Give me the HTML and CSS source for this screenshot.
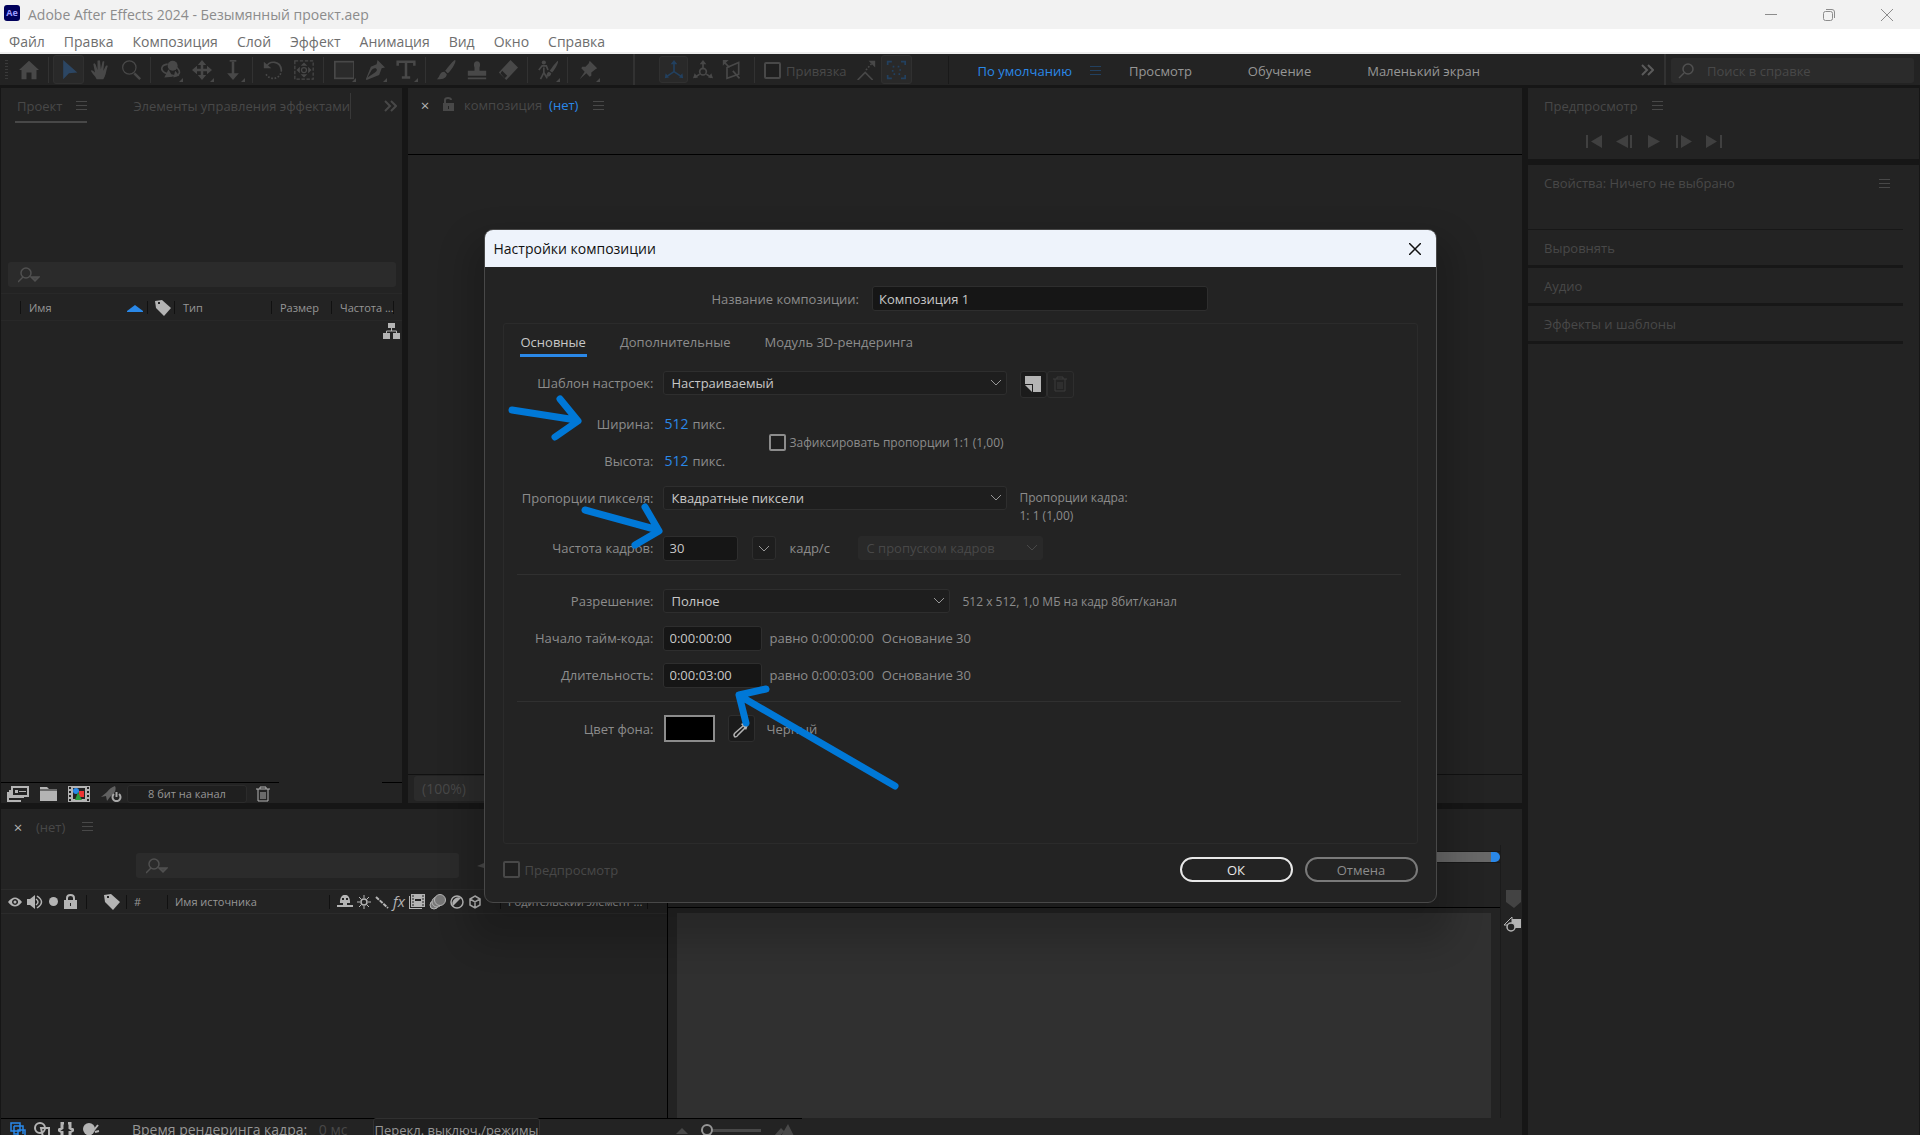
FILE: index.html
```html
<!DOCTYPE html>
<html lang="ru">
<head>
<meta charset="utf-8">
<title>Adobe After Effects 2024 - Безымянный проект.aep</title>
<link rel="stylesheet" href="styles.css">
</head>
<body>
<header class="titlebar">
  <span class="app-badge">Ae</span>
  <span class="app-title">Adobe After Effects 2024 - Безымянный проект.aep</span>
  <div class="window-buttons">
    <button aria-label="Свернуть"><svg width="14" height="14" viewBox="0 0 14 14"><path d="M1 6.500h12"/></svg></button>
    <button aria-label="Восстановить"><svg width="14" height="14" viewBox="0 0 14 14"><rect x="1.500" y="3.500" width="9" height="9" rx="2"/><path d="M4 1.500h6q2.500 0 2.500 2.500v6"/></svg></button>
    <button aria-label="Закрыть"><svg width="14" height="14" viewBox="0 0 14 14"><path d="M1 1l12 12M13 1L1 13"/></svg></button>
  </div>
</header>
<nav class="menubar">
  <a href="#">Файл</a><a href="#">Правка</a><a href="#">Композиция</a><a href="#">Слой</a><a href="#">Эффект</a><a href="#">Анимация</a><a href="#">Вид</a><a href="#">Окно</a><a href="#">Справка</a>
</nav>

<div class="toolbar">
  <span class="grip"></span>
  <button class="tool" aria-label="Главная"><svg viewBox="0 0 24 24"><path class="f" d="M12 1L24 12h-3v11h-6v-8H9v8H3V12H0z"/></svg></button>
  <span class="sep"></span>
  <button class="tool on" aria-label="Выделение"><svg viewBox="0 0 24 24"><path fill="#2c4663" d="M5 0l17 15-10 1-7 7z"/></svg></button>
  <button class="tool" aria-label="Рука"><svg viewBox="0 0 24 24"><path class="f" d="M8 23c-2-4-5-6-7-10 1-2 3 0 5 2L4 5c1-2 2-1 3 1l2 6 0-11c1-1 3-1 3 0l1 10 2-9c1-1 3 0 2 1l-1 10 3-6c1-1 3 0 2 1-2 6-2 11-5 15z"/></svg></button>
  <button class="tool" aria-label="Масштаб"><svg viewBox="0 0 24 24"><circle class="s" cx="10" cy="9" r="8"/><path class="s w3" d="M16 16l7 7"/></svg></button>
  <span class="sep"></span>
  <button class="tool more" aria-label="Орбита"><svg viewBox="0 0 24 24"><circle class="f" cx="14" cy="7" r="6"/><path class="s w2" d="M8 5C0 6-1 12 4 15l7 3M19 9c5 5 4 9-3 10l-4-1"/><path class="f" d="M9 11l5 9-10 1zM17 13l-2 8 7-2z"/></svg></button>
  <button class="tool more" aria-label="Панорама"><svg viewBox="0 0 24 24"><path class="s w3" d="M12 4v16M4 12h16"/><path class="f" d="M12 0l5 6H7zM12 24l5-6H7zM0 12l6-5v10zM24 12l-6-5v10z"/></svg></button>
  <button class="tool more" aria-label="Приближение"><svg viewBox="0 0 24 24"><path class="s w3" d="M12 2v16"/><path class="s w2" d="M8 1h8"/><path class="f" d="M12 24l7-8H5z"/></svg></button>
  <span class="sep"></span>
  <button class="tool" aria-label="Поворот"><svg viewBox="0 0 24 24"><path class="s w2" d="M4 8C8 0 21 1 22 12"/><path class="s w2" stroke-dasharray="2 2" d="M22 12c0 11-14 14-19 4"/><path class="f" d="M1 2v8h9z"/></svg></button>
  <button class="tool" aria-label="Опорная точка"><svg viewBox="0 0 24 24"><rect class="s" x="1" y="1" width="22" height="22" stroke-dasharray="4 2"/><circle class="s" cx="12" cy="12" r="3"/><path class="f" d="M12 3l4 4H8zM12 21l4-4H8zM3 12l4-4v8zM21 12l-4-4v8z"/></svg></button>
  <span class="sep"></span>
  <button class="tool more" aria-label="Прямоугольник"><svg viewBox="0 0 24 24"><rect x="1" y="2" width="23" height="20" fill="#2b2b2b" stroke="#484848" stroke-width="2"/></svg></button>
  <button class="tool more" aria-label="Перо"><svg viewBox="0 0 24 24"><path class="f" fill-rule="evenodd" d="M15 0l9 9-4 1-3 8L2 24l-1-1L7 8l7-3zM3 21l9-6q4-3 1-5-3-1-5 2z"/></svg></button>
  <button class="tool more" aria-label="Текст"><svg viewBox="0 0 24 24"><path class="s w3" d="M2 7V2h20v5M12 2v19M7 21h10"/></svg></button>
  <span class="sep"></span>
  <button class="tool" aria-label="Кисть"><svg viewBox="0 0 24 24"><path class="f" d="M23 0c2 2-5 13-9 16l-3-3C14 9 21 0 23 0zM10 14l3 3c-1 6-7 6-12 6 4-3 3-9 9-9z"/></svg></button>
  <button class="tool" aria-label="Штамп"><svg viewBox="0 0 24 24"><path class="f" d="M9 9C5-1 19-1 15 9v4h8v6H1v-6h8zM1 21h22v2H1z"/></svg></button>
  <button class="tool" aria-label="Ластик"><svg viewBox="0 0 24 24"><path class="f" d="M15 0l9 9-14 15-9-9z"/><path d="M5 13l6 6-3 3-5-6z" fill="#232323"/></svg></button>
  <span class="sep"></span>
  <button class="tool more" aria-label="Ротоскопия"><svg viewBox="0 0 24 24"><circle class="f" cx="7" cy="3" r="2.500"/><path class="s w2" d="M1 12l4-5h5l2 5M7 9v6l-4 8M7 15l4 7"/><path class="f" d="M24 1c1 2-4 11-7 14l-3-2c3-4 8-11 10-12zM13 14l3 2c-1 5-4 4-7 4 2-2 1-5 4-6z"/></svg></button>
  <span class="sep"></span>
  <button class="tool more" aria-label="Марионетка"><svg viewBox="0 0 24 24"><path class="f" d="M14 1l9 9-2 1-5 4v4l-2 1-4-4-8 7 6-9-4-4 1-2h4l4-4z"/></svg></button>
  <span class="sep wide"></span>
  <div class="axes">
    <button class="tool axis on" aria-label="Локальные оси"><svg viewBox="0 0 24 24"><path stroke="#22405f" fill="none" stroke-width="2" d="M12 3v11L3 20M12 14l9 6"/><path fill="#22405f" d="M12 0l4 5H8zM1 22l1-6 4 5zM23 22l-1-6-4 5z"/></svg></button>
    <button class="tool axis" aria-label="Мировые оси"><svg viewBox="0 0 24 24"><path class="s w2" d="M12 3v8M8 17l-6 4M16 17l6 4"/><circle class="s w2" cx="12" cy="14" r="4"/><path class="f" d="M12 0l4 5H8zM0 22l2-6 4 5zM24 22l-2-6-4 5z"/></svg></button>
    <button class="tool axis" aria-label="Оси вида"><svg viewBox="0 0 24 24"><path class="s w2" d="M2 2l7 7M6 9l14-6v14L6 22zM13 13l8 9"/><path class="f" d="M1 0h7L1 7z"/></svg></button>
  </div>
  <span class="sep"></span>
  <label class="snap"><input class="check dim" type="checkbox">Привязка</label>
  <button class="tool axis" aria-label="Привязка к краям"><svg viewBox="0 0 24 24"><path class="s w2" d="M2 24l9-9 9 9"/><path class="s w2" stroke-dasharray="2 2" d="M12 12l7-8"/><path class="f" d="M15 1h8v8z"/></svg></button>
  <button class="tool on" aria-label="Привязка к элементам"><svg viewBox="0 0 24 24"><path stroke="#22405f" fill="none" stroke-width="2" d="M2 6V2h5M18 2h5v4M23 18v4h-5M7 22H2v-4"/><path stroke="#22405f" fill="none" stroke-width="2" stroke-dasharray="2 4" d="M8 8h9v9H8z"/></svg></button>
  <span class="sep far"></span>
  <div class="workspaces">
    <a class="current" href="#">По умолчанию</a><span class="burger blue"></span>
    <a href="#">Просмотр</a><a href="#">Обучение</a><a href="#">Маленький экран</a>
  </div>
  <div class="help">
    <svg class="chev" width="13" height="12" viewBox="0 0 13 12"><path d="M1 1l5 5-5 5M7 1l5 5-5 5"/></svg>
    <span class="sep"></span>
    <label class="field helpfield"><svg class="lens" width="18" height="16" viewBox="0 0 18 16"><circle cx="11" cy="6" r="5"/><path d="M7 10l-5 5"/></svg><input type="text" placeholder="Поиск в справке" aria-label="Поиск в справке"></label>
  </div>
</div>

<main class="workspace">
  <div class="left">
    <div class="upper">
      <section class="panel project">
        <div class="tabs">
          <span class="tab active">Проект<span class="burger"></span></span>
          <span class="tab second">Элементы управления эффектами</span>
          <svg class="chev" width="13" height="12" viewBox="0 0 13 12"><path d="M1 1l5 5-5 5M7 1l5 5-5 5"/></svg>
        </div>
        <label class="field search"><svg class="lens" width="22" height="16" viewBox="0 0 22 16"><circle cx="8" cy="6" r="5"/><path d="M5 10l-5 5"/><path d="M13 10h8l-4 4z" class="f"/></svg><input type="text" aria-label="Поиск в проекте"></label>
        <table class="columns">
          <thead><tr>
            <th class="c-pad"></th>
            <th class="c-name"><span class="cell">Имя<svg width="16" height="7" viewBox="0 0 16 7"><path fill="#2a88e8" d="M8 0l8 6v1H0V6z"/></svg></span></th>
            <th class="c-tag"><svg width="16" height="16" viewBox="0 0 16 16"><path class="lit" fill-rule="evenodd" d="M0 1l7-1 9 8-7 8-8-8zM3 2v2h2V2z"/></svg></th>
            <th class="c-type">Тип</th>
            <th class="c-size">Размер</th>
            <th class="c-rate">Частота ...</th>
            <th></th>
          </tr></thead>
        </table>
        <div class="flow"><svg width="17" height="16" viewBox="0 0 17 16"><path class="lit" d="M5 0h7v5H5zM0 10h7v6H0zM10 10h7v6h-7z"/><path d="M8.500 5v3M3.500 10V8h10v2" stroke="#b4b4b4" fill="none"/></svg></div>
        <div class="project-foot">
          <button aria-label="Интерпретация"><svg width="22" height="16" viewBox="0 0 22 16"><path d="M5 1h16v9H5z" fill="none" stroke="#b4b4b4" stroke-width="2"/><path class="lit" d="M8 4h3v3H8zM12 5h7v1h-7zM2 4h2v7h13v1H2zM0 6h2v8h12v2H0z"/></svg></button>
          <button aria-label="Новая папка"><svg width="17" height="14" viewBox="0 0 17 14"><path class="lit" d="M0 0h7l2 2h8v12H0z"/><path d="M0 3h17" stroke="#232323"/></svg></button>
          <button aria-label="Новая композиция"><svg width="22" height="16" viewBox="0 0 22 16"><path class="lit" d="M0 0h22v16H0z"/><path d="M2 1v14M20 1v14" stroke="#232323" stroke-width="2" stroke-dasharray="2 2"/><path d="M5 2h12v11H5z" fill="#232323"/><circle cx="8" cy="5" r="3" fill="#2a88e8"/><path d="M11 5h5v6h-5z" fill="#e33"/><path d="M10 6l4 8H7z" fill="#2a9a3a"/></svg></button>
          <button aria-label="Ускорение"><svg width="22" height="16" viewBox="0 0 22 16"><path fill="#606060" d="M14 0c2 4-1 8-5 11l-3 4-1-5-5 1 6-5C8 3 11 1 14 0z"/><path d="M13 8a4 4 0 1 0 5 0M15.500 6v5" stroke="#a8a8a8" stroke-width="2" fill="none"/></svg></button>
          <button class="depth">8 бит на канал</button>
          <button aria-label="Удалить"><svg width="14" height="16" viewBox="0 0 14 16"><path d="M0 3h14M4 3V1h6v2M2 3v12h10V3M5 6v7M7 6v7M9 6v7" fill="none" stroke="#b4b4b4"/></svg></button>
        </div>
      </section>
      <section class="panel comp">
        <div class="tabs">
          <button class="x" aria-label="Закрыть">×</button>
          <svg class="lock" width="13" height="14" viewBox="0 0 13 14"><path d="M1 6h11v8H1z" fill="#484848"/><path d="M3 6V3q0-2 3-2t3 2" fill="none" stroke="#484848" stroke-width="2"/><path d="M6 9h1v3H6z" fill="#232323"/></svg>
          <span>композиция</span><a class="blue-text" href="#">(нет)</a><span class="burger"></span>
        </div>
        <div class="viewer"></div>
        <div class="comp-foot"><button>(100%)</button></div>
      </section>
    </div>
    <section class="panel timeline">
      <div class="tabs"><button class="x" aria-label="Закрыть">×</button><span>(нет)</span><span class="burger"></span></div>
      <div class="time-body">
        <div class="layers">
          <div class="layer-tools">
            <label class="field layersearch"><svg class="lens" width="22" height="16" viewBox="0 0 22 16"><circle cx="8" cy="6" r="5"/><path d="M5 10l-5 5"/><path d="M13 10h8l-4 4z" class="f"/></svg><input type="text" aria-label="Поиск слоёв"></label>
            <svg width="14" height="5" viewBox="0 0 14 5"><path fill="#484848" d="M0 3l7-3v5z"/></svg>
          </div>
          <div class="layer-head">
            <div class="lh av">
              <svg width="14" height="10" viewBox="0 0 14 10"><path class="lit" fill-rule="evenodd" d="M0 5q7-9 14 0-7 9-14 0zM7 2a3 3 0 1 0 .1 0z"/><circle class="lit" cx="7" cy="5" r="1.500"/></svg>
              <svg width="16" height="14" viewBox="0 0 16 14"><path class="lit" d="M0 4h3l5-4v14l-5-4H0z"/><path d="M9 4q4 3 0 6M10 1q9 6 0 12" stroke="#b4b4b4" stroke-width="1.500" fill="none"/></svg>
              <svg width="11" height="11" viewBox="0 0 11 11"><circle class="lit" cx="5.500" cy="5.500" r="4.500"/></svg>
              <svg width="13" height="15" viewBox="0 0 13 15"><path class="lit" fill-rule="evenodd" d="M0 6h13v9H0zM6 9v3h1V9z"/><path d="M3 6V4q0-3 3.500-3T10 4v2" stroke="#b4b4b4" stroke-width="2" fill="none"/></svg>
            </div>
            <div class="lh tag"><svg width="16" height="16" viewBox="0 0 16 16"><path class="lit" fill-rule="evenodd" d="M0 1l7-1 9 8-7 8-8-8zM3 2v2h2V2z"/></svg></div>
            <div class="lh num">#</div>
            <div class="lh source">Имя источника</div>
            <div class="lh switches">
              <svg width="16" height="14" viewBox="0 0 16 14"><path class="lit" fill-rule="evenodd" d="M3 8C2-3 14-3 13 8h-3v2h6v2H0v-2h6V8zM5 3v2h2V3zM9 3v2h2V3z"/></svg>
              <svg width="14" height="14" viewBox="0 0 14 14"><circle cx="7" cy="7" r="3" fill="none" stroke="#b4b4b4" stroke-width="1.500"/><path d="M7 0v3M7 11v3M0 7h3M11 7h3M2 2l2 2M10 10l2 2M12 2l-2 2M4 10l-2 2" stroke="#b4b4b4"/></svg>
              <svg width="14" height="14" viewBox="0 0 14 14"><path d="M1 2l12 11" stroke="#b4b4b4" stroke-width="2" stroke-dasharray="4 1"/></svg>
              <i class="fx">fx</i>
              <svg width="16" height="15" viewBox="0 0 16 15"><path class="lit" d="M0 2h1v12h12v1H0zM2 0h14v13H2z"/><path d="M4 1v12M14 1v12" stroke="#232323" stroke-dasharray="2 1"/><path d="M6 6h6" stroke="#232323" stroke-width="2"/></svg>
              <svg width="17" height="16" viewBox="0 0 17 16"><g fill="#777" stroke="#b4b4b4"><circle cx="5" cy="11" r="4"/><circle cx="8" cy="8" r="5"/><circle cx="11" cy="6" r="5.500"/></g></svg>
              <svg width="14" height="14" viewBox="0 0 14 14"><circle cx="7" cy="7" r="6" fill="#232323" stroke="#b4b4b4" stroke-width="1.500"/><path class="lit" d="M11 3a6 6 0 0 0-8 8z"/></svg>
              <svg width="14" height="14" viewBox="0 0 14 14"><path d="M7 1l5 3v6l-5 3-5-3V4zM2 4l5 3 5-3M7 7v6" fill="none" stroke="#b4b4b4" stroke-width="1.500"/></svg>
            </div>
            <div class="lh parent">Родительский элемент ...</div>
          </div>
        </div>
        <div class="track">
          <div class="workarea"><span class="bar"></span><span class="cap"></span></div>
          <div class="ruler"></div>
          <div class="tracks"></div>
        </div>
        <div class="side">
          <svg width="15" height="18" viewBox="0 0 15 18"><path fill="#434343" d="M0 0h15v12l-7 6-8-6z"/></svg>
          <svg width="18" height="16" viewBox="0 0 18 16"><path class="lit" d="M9 3h9v9H9z"/><path d="M1 9l8-8v8z" stroke="#b4b4b4" fill="#232323"/><circle cx="8" cy="11" r="4" fill="#232323" stroke="#b4b4b4" stroke-width="1.500"/></svg>
        </div>
      </div>
      <div class="time-foot">
        <div class="panes">
          <svg width="16" height="16" viewBox="0 0 16 16"><path d="M1 1h9v8H1zM4 4h9v8M4 4v8h4M8 8h7v7H8z" stroke="#2a88e8" stroke-width="1.500" fill="none"/></svg>
          <svg width="16" height="16" viewBox="0 0 16 16"><circle cx="6" cy="6" r="5" fill="none" stroke="#b4b4b4" stroke-width="2"/><path d="M7 6h8v9H9z" fill="none" stroke="#b4b4b4" stroke-width="2"/></svg>
          <svg width="16" height="16" viewBox="0 0 16 16"><path d="M6 1H4v5L1 8l3 2v5h2M10 1h2v5l3 2-3 2v5h-2" fill="none" stroke="#b4b4b4" stroke-width="3"/></svg>
          <svg width="18" height="16" viewBox="0 0 18 16"><circle class="lit" cx="7" cy="7" r="6"/><path class="lit" d="M1 16q6-9 12 0z"/><path d="M12 8l4-5M13 10l4-1" stroke="#b4b4b4" stroke-width="2"/></svg>
        </div>
        <span class="render">Время рендеринга кадра: <span class="ms">0 мс</span></span>
        <button class="toggle">Перекл. выключ./режимы</button>
        <div class="zoomer">
          <svg width="12" height="8" viewBox="0 0 12 8"><path fill="#484848" d="M0 8l6-6 6 6z"/></svg>
          <input type="range" min="0" max="100" value="0" aria-label="Масштаб времени">
          <svg width="20" height="12" viewBox="0 0 20 12"><path fill="#484848" d="M0 12l7-8 3 3-4 5zM7 12l7-12 6 12z"/></svg>
        </div>
      </div>
    </section>
  </div>
  <aside class="right">
    <section class="panel preview">
      <div class="tabs">Предпросмотр<span class="burger"></span></div>
      <div class="transport">
        <button aria-label="В начало"><svg width="16" height="13" viewBox="0 0 16 13"><path d="M0 0h2v13H0zM16 0v13L5 6.500z"/></svg></button>
        <button aria-label="Кадр назад"><svg width="16" height="13" viewBox="0 0 16 13"><path d="M14 0h2v13h-2zM12 0v13L0 6.500z"/></svg></button>
        <button aria-label="Воспроизвести"><svg width="16" height="13" viewBox="0 0 16 13"><path d="M2 0l12 6.500L2 13z"/></svg></button>
        <button aria-label="Кадр вперёд"><svg width="16" height="13" viewBox="0 0 16 13"><path d="M0 0h2v13H0zM5 0l11 6.500L5 13z"/></svg></button>
        <button aria-label="В конец"><svg width="16" height="13" viewBox="0 0 16 13"><path d="M14 0h2v13h-2zM0 0l11 6.500L0 13z"/></svg></button>
      </div>
    </section>
    <section class="panel stack">
      <div class="item props">Свойства: Ничего не выбрано<span class="burger"></span></div>
      <div class="item">Выровнять</div>
      <div class="item">Аудио</div>
      <div class="item">Эффекты и шаблоны</div>
    </section>
  </aside>
</main>

<div class="dialog" role="dialog" aria-labelledby="dlg-title">
  <div class="dlg-head"><h1 id="dlg-title">Настройки композиции</h1><button aria-label="Закрыть"><svg width="12" height="12" viewBox="0 0 12 12"><path d="M0 0l12 12M12 0L0 12" stroke="#111" stroke-width="1.500"/></svg></button></div>
  <div class="dlg-body">
    <div class="name-row"><label for="cname">Название композиции:</label><input class="box" id="cname" type="text" value="Композиция 1"></div>
    <div class="sheet">
      <div class="dlg-tabs"><button class="active">Основные</button><button>Дополнительные</button><button>Модуль 3D-рендеринга</button></div>
      <div class="row">
        <label for="preset">Шаблон настроек:</label>
        <span class="pick long"><select id="preset"><option>Настраиваемый</option></select><svg width="12" height="7" viewBox="0 0 12 7"><path d="M1 1l5 5 5-5"/></svg></span>
        <div class="pair">
          <button class="sq" aria-label="Сохранить шаблон"><svg width="16" height="16" viewBox="0 0 16 16"><path d="M0 0h16v16H8V8H0z" fill="#b4b4b4"/><path d="M0 9h7v7z" fill="#b4b4b4"/></svg></button>
          <button class="sq off" aria-label="Удалить шаблон"><svg width="14" height="16" viewBox="0 0 14 16"><path d="M0 3h14M4 3V1h6v2M2 3v12h10V3M5 6v7M7 6v7M9 6v7" fill="none" stroke="#3c3c3c"/></svg></button>
        </div>
      </div>
      <div class="dims">
        <div class="dims-rows">
          <div class="row"><span class="lab">Ширина:</span><a class="num-link" href="#">512</a><span class="unit">пикс.</span></div>
          <div class="row"><span class="lab">Высота:</span><a class="num-link" href="#">512</a><span class="unit">пикс.</span></div>
        </div>
        <label class="ratio"><input class="check" type="checkbox">Зафиксировать пропорции 1:1 (1,00)</label>
      </div>
      <div class="row">
        <label for="par">Пропорции пикселя:</label>
        <span class="pick long"><select id="par"><option>Квадратные пиксели</option></select><svg width="12" height="7" viewBox="0 0 12 7"><path d="M1 1l5 5 5-5"/></svg></span>
        <p class="note two-lines">Пропорции кадра:<br>1: 1 (1,00)</p>
      </div>
      <div class="row fps">
        <label for="rate">Частота кадров:</label>
        <input class="box short" id="rate" type="text" value="30">
        <button class="drop" aria-label="Выбрать частоту"><svg width="12" height="7" viewBox="0 0 12 7"><path d="M1 1l5 5 5-5"/></svg></button>
        <span class="per">кадр/с</span>
        <span class="pick dis"><select aria-label="Тайм-код" disabled><option>С пропуском кадров</option></select><svg width="12" height="7" viewBox="0 0 12 7"><path d="M1 1l5 5 5-5"/></svg></span>
      </div>
      <hr>
      <div class="row">
        <label for="res">Разрешение:</label>
        <span class="pick mid"><select id="res"><option>Полное</option></select><svg width="12" height="7" viewBox="0 0 12 7"><path d="M1 1l5 5 5-5"/></svg></span>
        <span class="note">512 x 512, 1,0 МБ на кадр 8бит/канал</span>
      </div>
      <div class="row tight"><label for="start">Начало тайм-кода:</label><input class="box code" id="start" type="text" value="0:00:00:00"><span class="eq">равно 0:00:00:00</span><span class="eq">Основание 30</span></div>
      <div class="row tight"><label for="dur">Длительность:</label><input class="box code" id="dur" type="text" value="0:00:03:00"><span class="eq">равно 0:00:03:00</span><span class="eq">Основание 30</span></div>
      <hr>
      <div class="row colour"><span class="lab">Цвет фона:</span><button class="swatch" aria-label="Цвет фона"></button><button class="sq" aria-label="Пипетка"><svg width="16" height="18" viewBox="0 0 16 18"><path d="M10 6L2 13q-2 2 0 4 2 0 3-2l7-7" fill="none" stroke="#b4b4b4" stroke-width="1.500"/><path d="M8 4l2-1c2-4 6-3 6 0 0 2-2 3-2 5l-1 2z" fill="#b4b4b4"/></svg></button><span>Черный</span></div>
    </div>
    <div class="dlg-foot">
      <label class="prev"><input class="check dim" type="checkbox" disabled>Предпросмотр</label>
      <button class="pill primary">ОК</button><button class="pill">Отмена</button>
    </div>
  </div>
  <svg class="arrows" viewBox="0 0 951 674" width="951" height="674" aria-hidden="true">
    <path d="M27 180L91 190M75 169L93 191 70 207"/>
    <path d="M100 280L173 300M160 277L174 301 150 315"/>
    <path d="M410 556L255 466M281 459L254 465 261 493"/>
  </svg>
</div>
</body>
</html>
```
FILE: styles.css
```css
* { box-sizing: border-box; }
body {
  margin: 0;
  height: 100vh;
  overflow: hidden;
  position: relative;
  display: flex;
  flex-direction: column;
  background: #161616;
  color: #484848;
  font: 13px/18px "Open Sans", "Noto Sans", sans-serif;
}
button, input, select { font: inherit; color: inherit; }
button { background: none; border: 0; padding: 0; }
a { color: inherit; text-decoration: none; }
svg { display: block; flex: none; }
p { margin: 0; }
.lit { fill: #b4b4b4; }

/* Window frame */
.titlebar { flex: none; height: 29px; display: flex; align-items: center; background: #f2f2f2; color: #8c8c8c; font-size: 14px; padding-left: 4px; }
.app-badge { width: 16px; height: 16px; border-radius: 3px; background: #00005b; color: #9a9aff; font-size: 9px; line-height: 16px; font-weight: 700; text-align: center; margin-bottom: 3px; }
.app-title { margin-left: 8px; }
.window-buttons { margin-left: auto; display: flex; }
.window-buttons button { width: 58px; height: 29px; display: grid; place-items: center; }
.window-buttons svg { fill: none; stroke: #8c8c8c; }
.window-buttons button:last-child { margin-right: 4px; }
.menubar { flex: none; height: 25px; display: flex; gap: 19px; padding: 3px 9px 0; background: #fff; border-bottom: 2px solid #efefef; color: #6e6e6e; font-size: 14px; line-height: 20px; }

/* Toolbar */
.toolbar { flex: none; height: 31px; display: flex; align-items: center; background: #232323; padding-left: 5px; margin-bottom: 3px; white-space: nowrap; }
.grip { width: 3px; height: 19px; margin-right: 5px; background: repeating-linear-gradient(#3a3a3a 0 1px, #232323 1px 3px); }
.sep { width: 1px; height: 26px; margin: 0 4px; background: #323232; flex: none; }
.sep.wide { width: 2px; height: 31px; margin: 0 24px 0 30px; }
.sep.far { margin: 0 29px 0 36px; background: #191919; height: 28px; }
.tool { position: relative; width: 31px; height: 29px; display: grid; place-items: center; border-radius: 3px; flex: none; }
.tool svg { width: 20px; height: 20px; }
.tool.on { background: #292929; border: 1px solid #303030; }
.tool.axis { width: 29px; height: 27px; }
.tool.more::after { content: ""; position: absolute; right: 3px; bottom: 2px; border-left: 4px solid transparent; border-bottom: 4px solid #484848; }
.f { fill: #484848; }
.s { fill: none; stroke: #484848; stroke-width: 1.500; }
.w2 { stroke-width: 2; }
.w3 { stroke-width: 3; }
.axes { display: flex; margin-right: 4px; }
.snap { display: flex; align-items: center; gap: 5px; margin: 2px 5px 0; }
.check { appearance: none; width: 17px; height: 17px; margin: 0; border: 2px solid #8c8c8c; border-radius: 2px; background: #1f1f1f; flex: none; }
.check.dim { border-color: #484848; }
.workspaces { display: flex; align-items: center; color: #969696; padding-top: 2px; }
.workspaces a + a { margin-left: 56px; }
.workspaces .burger { margin: 0 28px 0 18px; }
.current, .blue-text { color: #2a88e8; }
.burger { display: inline-block; width: 11px; height: 9px; flex: none; background: repeating-linear-gradient(#484848 0 1px, transparent 1px 4px); }
.burger.blue { background: repeating-linear-gradient(#22405f 0 1px, transparent 1px 4px); }
.help { margin-left: auto; display: flex; align-items: center; gap: 5px; padding-right: 6px; }
.help .sep { width: 2px; height: 31px; margin: 0 0 0 5px; }
.chev { fill: none; stroke: #5a5a5a; stroke-width: 2; }
.field { display: flex; align-items: center; height: 25px; background: #2b2b2b; border-radius: 3px; }
.field input { flex: 1; min-width: 0; background: none; border: 0; padding: 0; outline: 0; }
.field input::placeholder { color: #484848; opacity: 1; }
.lens { fill: none; stroke: #505050; stroke-width: 1.500; }
.helpfield { width: 243px; padding-left: 6px; gap: 12px; margin-top: 2px; }

/* Panels */
.workspace { flex: 1; min-height: 0; display: grid; grid-template-columns: minmax(0, 1fr) 391px; gap: 6px; padding: 0 1px; }
.left { display: flex; flex-direction: column; gap: 6px; min-height: 0; }
.upper { flex: 1; min-height: 0; display: grid; grid-template-columns: 401px minmax(0, 1fr); gap: 6px; }
.panel { background: #232323; min-width: 0; display: flex; flex-direction: column; }
.tabs { display: flex; align-items: center; height: 36px; padding-bottom: 1px; flex: none; white-space: nowrap; }
.tab.active { display: flex; align-items: center; gap: 14px; height: 29px; padding: 0 0 3px 2px; border-bottom: 2px solid #484848; }
.project .tabs { padding: 0 5px 1px 14px; }
.project .tab.active { margin-top: 5px; }
.tab.second { margin-left: 46px; height: 26px; line-height: 26px; border-right: 1px solid #383838; }
.project .chev { margin-left: auto; stroke: #484848; }
.search { margin: 138px 6px 6px 7px; padding-left: 10px; }
.columns { border-collapse: collapse; table-layout: fixed; width: 100%; height: 28px; border-top: 1px solid #282828; border-bottom: 1px solid #282828; color: #969696; font-size: 11px; line-height: 14px; }
.columns th { font-weight: 400; text-align: left; padding: 2px 0 0; background: linear-gradient(#111, #111) right center / 1px 13px no-repeat; }
.c-pad { width: 20px; }
.c-name { width: 127px; }
.c-tag { width: 27px; }
.c-type { width: 97px; }
.c-size { width: 60px; }
.c-rate { width: 62px; }
.columns th + th { padding-left: 8px; }
.columns .c-tag { padding-left: 7px; }
.columns th:last-child { background: none; }
.cell { display: flex; align-items: center; justify-content: space-between; padding-right: 5px; }
.flow { display: flex; justify-content: flex-end; padding: 2px 2px; }
.project-foot { margin-top: auto; height: 21px; display: flex; align-items: center; gap: 11px; padding: 2px 0 0 6px; background: linear-gradient(#000, #000) 0 0 / 278px 1px no-repeat, linear-gradient(#000, #000) right top / 20px 1px no-repeat; }
.depth { width: 120px; height: 18px; margin: 0 -2px 0 -7px; background: #1f1f1f; border: 1px solid #2b2b2b; border-radius: 3px; color: #969696; font-size: 11px; line-height: 14px; }
.x { color: #b4b4b4; width: 10px; font-size: 15px; }
.comp .tabs { height: 67px; padding: 0 12px 32px; border-bottom: 1px solid #000; }
.lock { margin: 0 9px 2px 12px; }
.comp .blue-text { margin: 0 15px 0 7px; }
.viewer { flex: 1; border-bottom: 1px solid #111; }
.comp-foot { height: 28px; padding: 1px 6px; }
.comp-foot button { height: 25px; width: 120px; text-align: left; padding-left: 8px; background: #2b2b2b; border-radius: 3px; font-size: 14px; }

/* Timeline */
.timeline { height: 326px; flex: none; overflow: hidden; }
.timeline .tabs { padding-left: 12px; }
.timeline .tabs .x { margin-right: 13px; }
.timeline .tabs .burger { margin-left: 17px; }
.time-body { height: 273px; flex: none; display: grid; grid-template-columns: 667px minmax(0, 1fr) 21px; }
.layers { border-right: 1px solid #000; }
.layer-tools { display: flex; gap: 18px; align-items: center; padding: 8px 0 11px 135px; }
.layersearch { width: 323px; padding-left: 10px; }
.layer-head { display: flex; align-items: center; height: 25px; border-top: 1px solid #2b2b2b; border-bottom: 1px solid #2b2b2b; color: #969696; font-size: 11px; line-height: 14px; }
.lh { display: flex; align-items: center; height: 14px; border-right: 1px solid #111; padding-left: 7px; white-space: nowrap; flex: none; }
.av { width: 86px; gap: 5px; }
.lh.tag { width: 40px; padding-left: 17px; }
.num { width: 41px; }
.source { width: 162px; }
.switches { width: 171px; gap: 4px; }
.fx { font-size: 15px; line-height: 15px; color: #b4b4b4; }
.parent { width: 147px; }
.track { display: flex; flex-direction: column; border-right: 1px solid #1b1b1b; }
.workarea { display: flex; height: 12px; margin-top: 6px; border: 1px solid #191919; border-width: 1px 0; }
.bar { flex: 1; background: #686868; }
.cap { width: 9px; border-radius: 0 5px 5px 0; background: #2a88e8; }
.ruler { height: 45px; border-bottom: 1px solid #000; }
.tracks { flex: 1; margin: 5px 9px 0; background: #303030; }
.side { display: flex; flex-direction: column; align-items: flex-end; gap: 8px; padding: 45px 1px 0 0; }
.time-foot { flex: none; height: 24px; display: flex; align-items: center; background: linear-gradient(#000, #000) 0 0 / 801px 1px no-repeat; color: #969696; font-size: 14px; white-space: nowrap; }
.panes { display: flex; gap: 8px; padding-left: 9px; width: 131px; }
.render { width: 241px; }
.ms { color: #484848; margin-left: 8px; }
.toggle { height: 24px; width: 167px; border: 1px solid #303030; border-radius: 3px; background: #1f1f1f; font-size: 13px; }
.zoomer { display: flex; align-items: center; gap: 13px; margin-left: 136px; }
.zoomer input { appearance: none; width: 60px; height: 12px; margin: 0; background: linear-gradient(#484848, #484848) center / 100% 3px no-repeat; }
.zoomer input::-webkit-slider-thumb { appearance: none; width: 12px; height: 12px; border: 2px solid #969696; border-radius: 50%; background: #232323; }

/* Right column */
.right { display: flex; flex-direction: column; gap: 6px; }
.preview { height: 71px; }
.preview .tabs { padding-left: 16px; gap: 14px; }
.transport { display: flex; gap: 14px; padding: 11px 0 0 58px; fill: #404040; }
.stack { flex: 1; padding-right: 16px; }
.item { display: flex; align-items: center; justify-content: space-between; height: 38px; padding: 0 13px 0 16px; border-bottom: 3px solid #171717; }
.item.props { height: 65px; padding-bottom: 28px; border-bottom-width: 1px; }

/* Composition settings */
.dialog { position: absolute; top: 229px; left: 0; right: 0; margin: 0 auto; width: 953px; background: #232323; border: 1px solid #484848; border-radius: 9px; color: #8c8c8c; box-shadow: 0 24px 32px 16px rgba(0, 0, 0, .18); white-space: nowrap; }
.dlg-head { height: 37px; display: flex; align-items: center; justify-content: space-between; padding: 0 15px 0 9px; background: #eef3fb; border-radius: 8px 8px 0 0; color: #111; }
.dlg-head h1 { margin: 0; font: inherit; font-size: 14px; }
.dlg-body { padding: 19px 18px 20px; }
.name-row { display: flex; align-items: center; gap: 13px; padding-left: 209px; }
.box { height: 25px; width: 336px; padding: 0 6px; background: #161616; border: 1px solid #2e2e2e; border-radius: 3px; color: #c8c8c8; }
.sheet { margin-top: 12px; height: 521px; border: 1px solid #2b2b2b; border-radius: 3px; padding: 5px 16px 0 13px; }
.dlg-tabs { display: flex; gap: 32px; padding-left: 3px; margin-bottom: 14px; }
.dlg-tabs button { height: 28px; padding: 0 1px; border-bottom: 3px solid transparent; }
.dlg-tabs .active { color: #c8c8c8; border-color: #2a88e8; }
.row { display: flex; align-items: center; height: 24px; }
.row > label, .lab { width: 137px; margin-right: 9px; text-align: right; }
.pick { position: relative; height: 24px; margin-right: 13px; }
.pick select { appearance: none; width: 100%; height: 24px; padding: 0 8px; background: #1e1e1e; border: 1px solid #2e2e2e; border-radius: 3px; color: #c8c8c8; opacity: 1; }
.pick svg { position: absolute; right: 5px; top: 8px; }
.pick svg, .drop svg { fill: none; stroke: #969696; }
.long { width: 344px; }
.mid { width: 287px; }
.pick.dis { width: 185px; }
.pick.dis select { background: #292929; border-color: #292929; color: #484848; }
.pick.dis svg { stroke: #484848; }
.pair { display: flex; padding-top: 2px; }
.sq { width: 27px; height: 27px; display: grid; place-items: center; background: #1b1b1b; border: 1px solid #2e2e2e; border-radius: 3px; }
.sq.off { background: #232323; }
.dims { display: flex; align-items: center; margin: 17px 0 13px; }
.dims-rows { display: grid; gap: 13px; width: 252px; }
.num-link { color: #2a88e8; margin: 0 4px 0 2px; font-size: 14px; }
.ratio { display: flex; align-items: center; gap: 4px; font-size: 12px; }
.note { font-size: 12px; padding-top: 2px; }
.two-lines { padding-top: 17px; }
.fps { margin: 26px 0 14px; }
.short { width: 75px; }
.drop { width: 24px; height: 24px; margin: 0 14px; display: grid; place-items: center; background: #1e1e1e; border: 1px solid #2e2e2e; border-radius: 3px; }
.per { width: 68px; }
.sheet hr { height: 1px; margin: 0 0 14px; border: 0; background: #303030; }
.tight { margin-top: 13px; }
.tight + hr { margin-top: 14px; margin-bottom: 13px; }
.code { width: 99px; }
.eq { margin-left: 8px; }
.colour { height: 27px; }
.swatch { width: 51px; height: 27px; margin: 0 13px 0 1px; background: #000; border: 2px solid #8c8c8c; }
.colour .sq { margin-right: 12px; }
.dlg-foot { display: flex; align-items: center; gap: 12px; margin-top: 13px; }
.prev { display: flex; align-items: center; gap: 5px; margin-right: auto; color: #484848; }
.pill { width: 113px; height: 25px; border: 2px solid #7a7a7a; border-radius: 13px; }
.pill.primary { border-color: #e8e8e8; color: #e8e8e8; }
.arrows { position: absolute; left: 0; top: 0; fill: none; stroke: #0078d7; stroke-width: 7; stroke-linecap: round; stroke-linejoin: round; pointer-events: none; }
```
